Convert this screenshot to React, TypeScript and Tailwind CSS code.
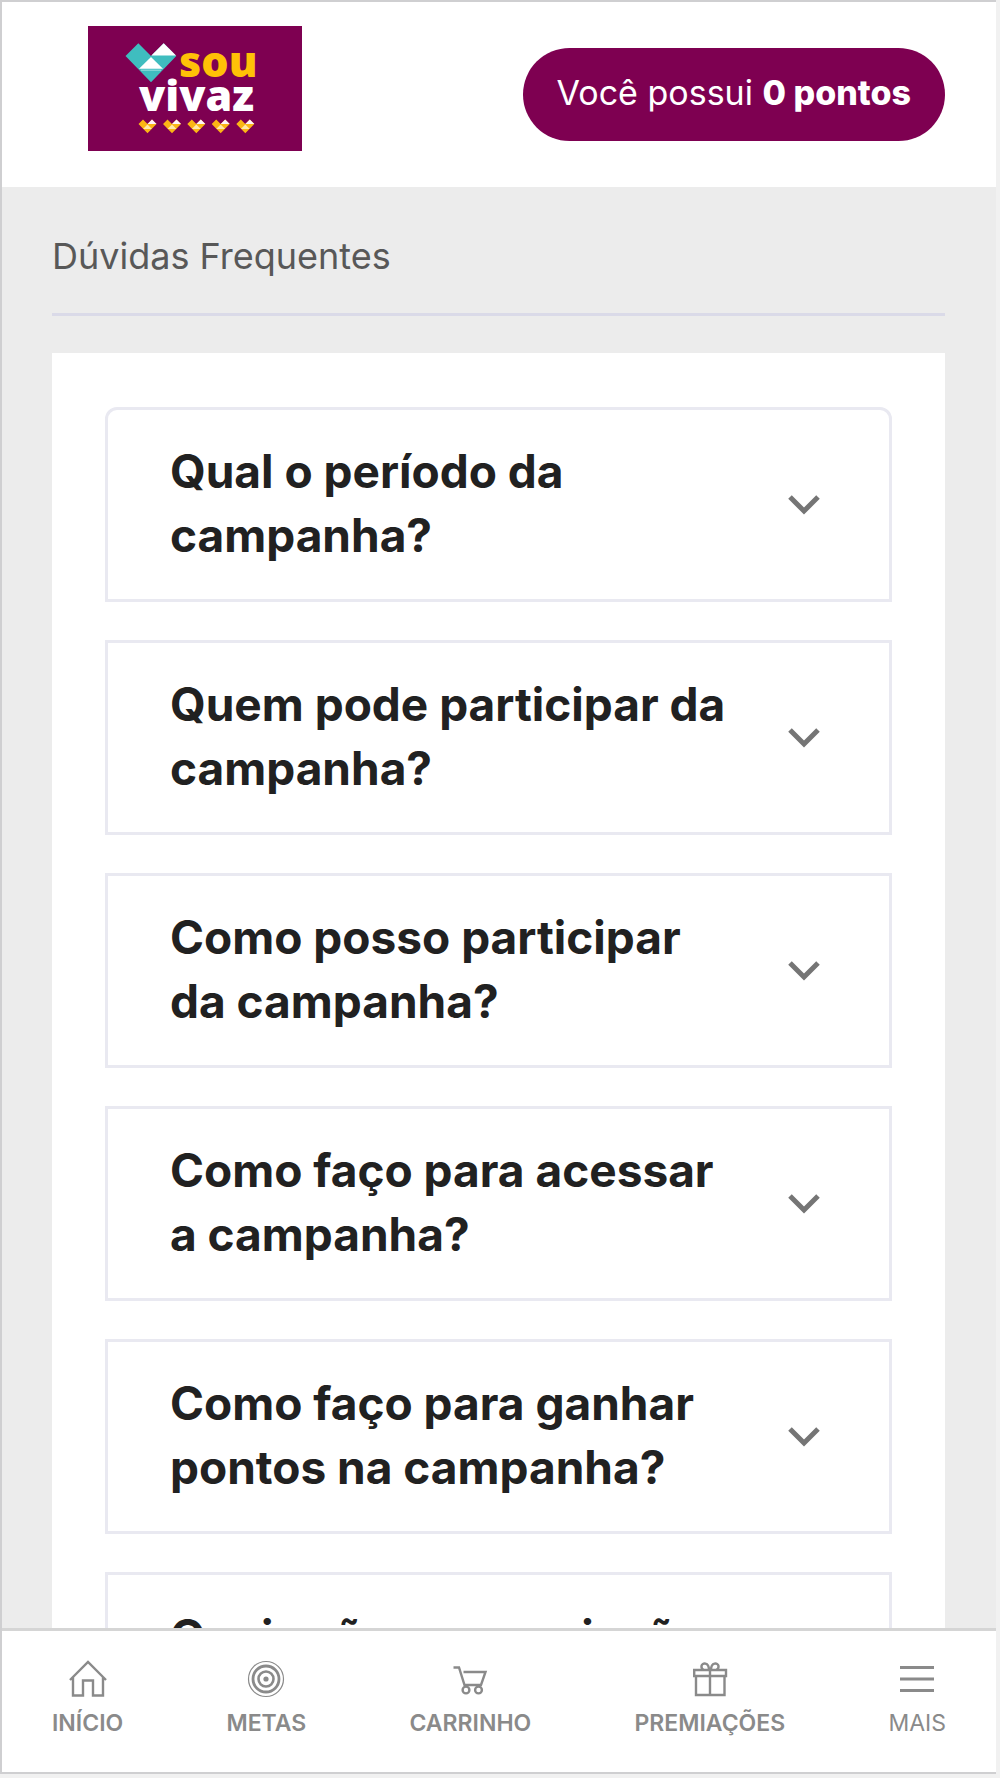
import type { ReactNode } from 'react';

const questions = [
  'Qual o período da campanha?',
  'Quem pode participar da campanha?',
  'Como posso participar da campanha?',
  'Como faço para acessar a campanha?',
  'Como faço para ganhar pontos na campanha?',
  'Quais são as premiações da campanha?',
];

function Logo() {
  return (
    <svg viewBox="0 0 214 125" className="h-[125px] w-[214px]" role="img" aria-label="Sou Vivaz">
      <rect width="214" height="125" fill="#7e0051" />
      <path d="M37.5 30 50.3 17.3 63 30 75.7 17.3 88.3 30 63 56.3Z" fill="#3fbdbf" />
      <path d="M75.7 17.3 88 29.6H63.4Z" fill="#fff" />
      <path d="M63 31 75 42.7H51Z" fill="#fff" />
      <path d="M53 44.2H73" stroke="#9adfe0" strokeWidth="1" />
      <text x="91" y="51" fontFamily="Open Sans" fontWeight="800" fontSize="43" fill="#ffc107">sou</text>
      <text x="51" y="85" fontFamily="Open Sans" fontWeight="800" fontSize="43" fill="#fff">vivaz</text>
      {[59.5, 84, 108.3, 132.7, 157.3].map((x) => (
        <g key={x} transform={`translate(${x} 93)`}>
          <path d="M-9 5-4.5.5 0 5 4.5.5 9 5 0 14.3Z" fill="#fbb615" />
          <path d="M4.5.5 9 5H0Z" fill="#fff3fa" />
          <path d="M0 5.5 4.5 10H-4.5Z" fill="#ffe9a8" />
        </g>
      ))}
    </svg>
  );
}

function Chevron() {
  return (
    <svg viewBox="0 0 32 20" className="mt-1 h-5 w-8 shrink-0" fill="none" stroke="#757575" strokeWidth="5" aria-hidden="true">
      <path d="M2 2 16 16 30 2" />
    </svg>
  );
}

function NavIcon({ children }: { children: ReactNode }) {
  return (
    <svg viewBox="0 0 40 40" className="size-10" fill="none" stroke="#8a8a8a" strokeWidth="2.4" aria-hidden="true">
      {children}
    </svg>
  );
}

const navItems = [
  {
    label: 'INÍCIO',
    weight: 'font-semibold',
    icon: <path d="M2 21 20 3 38 21M5 18.5V36.5H15V21.5H25V36.5H35V18.5" />,
  },
  {
    label: 'METAS',
    weight: 'font-semibold',
    icon: (
      <>
        <circle cx="20" cy="20" r="17.5" strokeWidth="1.2" />
        <circle cx="20" cy="20" r="13" strokeWidth="2.8" />
        <circle cx="20" cy="20" r="7.5" strokeWidth="2.6" />
        <circle cx="20" cy="20" r="2.6" fill="#8a8a8a" stroke="none" />
      </>
    ),
  },
  {
    label: 'CARRINHO',
    weight: 'font-semibold',
    icon: (
      <>
        <path d="M3.5 8.5H9L14.5 26H31L35.5 13H13.5" />
        <circle cx="16" cy="31" r="3.4" />
        <circle cx="28.5" cy="31" r="3.4" />
      </>
    ),
  },
  {
    label: 'PREMIAÇÕES',
    weight: 'font-semibold',
    icon: (
      <>
        <path d="M4.2 11H36V17H4.2ZM6 17V36H34.5V17M20 11V36" />
        <path d="M19 11C19 3 12 3.500 11.500 7 11.200 9 12 10 13.500 11M21 11C21 3 28 3.500 28.500 7 28.800 9 28 10 26.500 11" />
      </>
    ),
  },
  {
    label: 'MAIS',
    weight: 'font-normal',
    icon: <path d="M3 8.500H37M3 20H37M3 31.500H37" strokeWidth="2.8" />,
  },
];

export default function App() {
  return (
    <div className="h-screen bg-[#f1f1f1] pr-1 pb-1 font-['Inter',sans-serif]">
      <div className="flex h-full flex-col overflow-hidden border-t-2 border-b-2 border-l-2 border-[#cfcfd1] bg-[#ececec]">
        <header className="flex shrink-0 items-start justify-between bg-white pt-6 pr-[51px] pb-9 pl-[86px]">
          <Logo />
          <p className="mt-[22px] rounded-full bg-[#7e0051] px-[34px] pt-[21px] pb-6 text-[34px] leading-12 text-white">
            Você possui <strong className="font-extrabold">0 pontos</strong>
          </p>
        </header>

        <main className="flex min-h-0 flex-1 flex-col overflow-hidden pr-[51px] pl-[50px]">
          <h1 className="shrink-0 border-b-[3px] border-[#dadae8] pt-[45px] pb-[33px] text-[36px] leading-12 text-[#585858]">
            Dúvidas Frequentes
          </h1>
          <section className="mt-[37px] flex shrink-0 flex-col gap-[38px] bg-white px-[53px] pt-[54px] pb-[54px]">
            {questions.map((question) => (
              <button
                key={question}
                type="button"
                aria-expanded="false"
                className="flex items-center justify-between border-[3px] border-[#e9e9f1] pt-[29px] pr-[69px] pb-8 pl-[62px] text-left text-[46px] leading-16 font-bold text-[#212121] first:rounded-t-xl"
              >
                <span className="max-w-[565px]">{question}</span>
                <Chevron />
              </button>
            ))}
          </section>
        </main>

        <nav className="flex shrink-0 justify-between border-t-[3px] border-[#d5d5d5] bg-white px-[50px] pt-7 pb-[33px]">
          {navItems.map(({ label, weight, icon }) => (
            <a key={label} href="#" className="flex flex-col items-center gap-2 text-[23px] leading-8 text-[#8a8a8a]">
              <NavIcon>{icon}</NavIcon>
              <span className={weight}>{label}</span>
            </a>
          ))}
        </nav>
      </div>
    </div>
  );
}
